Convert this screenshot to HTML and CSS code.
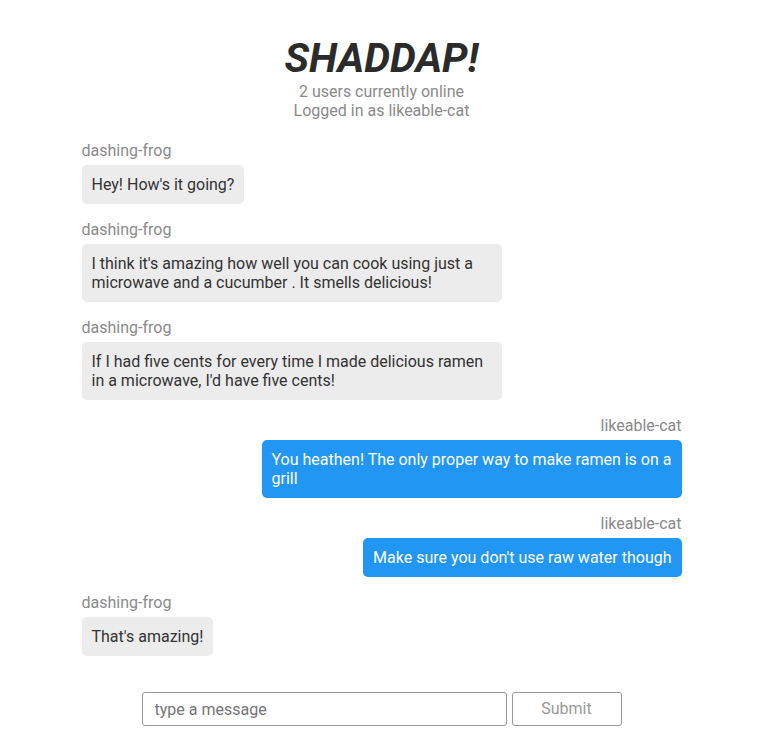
FILE: index.html
```html
<!DOCTYPE html>
<html>
<head>
<meta charset="utf-8">
<link rel="stylesheet" href="styles.css">
</head>
<body>
<div class="app">
  <header class="header">
    <h1 class="title">SHADDAP!</h1>
    <div class="sub">2 users currently online</div>
    <div class="sub">Logged in as likeable-cat</div>
  </header>
  <main class="messages">
    <div class="msg">
      <div class="name">dashing-frog</div>
      <div class="bubble">Hey! How's it going?</div>
    </div>
    <div class="msg">
      <div class="name">dashing-frog</div>
      <div class="bubble">I think it's amazing how well you can cook using just a microwave and a cucumber . It smells delicious!</div>
    </div>
    <div class="msg">
      <div class="name">dashing-frog</div>
      <div class="bubble">If I had five cents for every time I made delicious ramen in a microwave, I'd have five cents!</div>
    </div>
    <div class="msg mine">
      <div class="name">likeable-cat</div>
      <div class="bubble">You heathen! The only proper way to make ramen is on a grill</div>
    </div>
    <div class="msg mine">
      <div class="name">likeable-cat</div>
      <div class="bubble">Make sure you don't use raw water though</div>
    </div>
    <div class="msg">
      <div class="name">dashing-frog</div>
      <div class="bubble">That's amazing!</div>
    </div>
  </main>
  <form class="composer">
    <input class="input" type="text" placeholder="type a message">
    <button class="submit" type="button">Submit</button>
  </form>
</div>
</body>
</html>
```
FILE: styles.css
```css
html, body {
  margin: 0;
  padding: 0;
  background: #fff;
}
body {
  font-family: Roboto, "Liberation Sans", sans-serif;
  font-size: 16px;
  color: #333;
}
.app {
  width: 600px;
  margin: 0 auto;
  padding-top: 35px;
}
.header {
  text-align: center;
}
.title {
  margin: 0;
  font-size: 41px;
  font-weight: 700;
  font-style: italic;
  color: #2b2b2b;
  line-height: 47px;
}
.sub {
  color: #8a8a8a;
  line-height: 19px;
}
.messages {
  display: flex;
  flex-direction: column;
  gap: 16px;
  padding-top: 21px;
}
.msg {
  display: flex;
  flex-direction: column;
  align-items: flex-start;
  gap: 5px;
}
.msg.mine {
  align-items: flex-end;
}
.name {
  color: #8a8a8a;
}
.bubble {
  max-width: 400px;
  padding: 10px;
  border-radius: 5px;
  background: #ececec;
  color: #333;
}
.mine .bubble {
  background: #2196f3;
  color: #fff;
}
.composer {
  display: flex;
  justify-content: center;
  gap: 5px;
  margin: 36px -60px 0;
}
.input {
  width: 365px;
  height: 34px;
  box-sizing: border-box;
  border: 1px solid #999;
  border-radius: 3px;
  padding: 0 12px;
  font: inherit;
  font-size: 16px;
  color: #333;
}
.input::placeholder {
  color: #757575;
}
.submit {
  width: 110px;
  height: 34px;
  box-sizing: border-box;
  border: 1px solid #999;
  border-radius: 3px;
  background: #fff;
  font: inherit;
  font-size: 16px;
  color: #999;
  padding: 0 0 2px;
}
```
